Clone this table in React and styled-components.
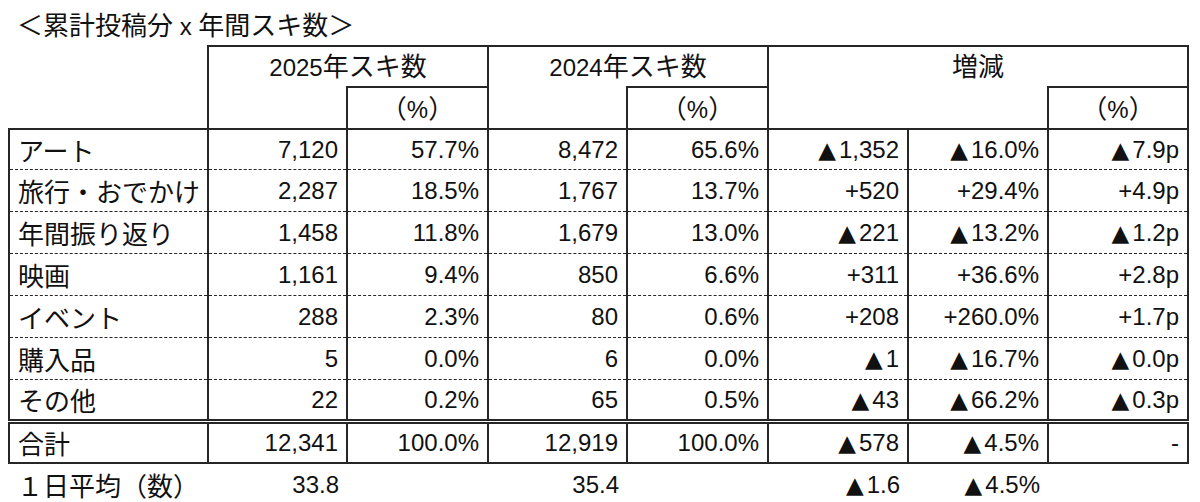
import React from "react";
import styled, { createGlobalStyle } from "styled-components";

const LINE = "#262626";
const SOLID = `2px solid ${LINE}`;
const DASHED = `1px dashed ${LINE}`;

const GlobalStyle = createGlobalStyle`
  html, body {
    margin: 0;
    padding: 0;
    background: #fff;
  }
  body {
    font-family: "Liberation Sans", "Noto Sans CJK JP", sans-serif;
    color: #111;
  }
`;

const widths = [199, 139, 141, 139, 141, 140, 140, 140];

const rows = [
  ["アート", "7,120", "57.7%", "8,472", "65.6%", "▲1,352", "▲16.0%", "▲7.9p"],
  ["旅行・おでかけ", "2,287", "18.5%", "1,767", "13.7%", "+520", "+29.4%", "+4.9p"],
  ["年間振り返り", "1,458", "11.8%", "1,679", "13.0%", "▲221", "▲13.2%", "▲1.2p"],
  ["映画", "1,161", "9.4%", "850", "6.6%", "+311", "+36.6%", "+2.8p"],
  ["イベント", "288", "2.3%", "80", "0.6%", "+208", "+260.0%", "+1.7p"],
  ["購入品", "5", "0.0%", "6", "0.0%", "▲1", "▲16.7%", "▲0.0p"],
  ["その他", "22", "0.2%", "65", "0.5%", "▲43", "▲66.2%", "▲0.3p"],
];

const total = ["合計", "12,341", "100.0%", "12,919", "100.0%", "▲578", "▲4.5%", "-"];
const average = ["１日平均（数）", "33.8", "", "35.4", "", "▲1.6", "▲4.5%", ""];

const Page = styled.div`
  width: 1200px;
  height: 502px;
  overflow: hidden;
  padding-left: 8px;
  box-sizing: border-box;
`;

const Title = styled.div`
  height: 45px;
  line-height: 48px;
  padding-left: 9px;
  font-size: 26px;
  font-family: "Noto Sans CJK JP", sans-serif;
  white-space: nowrap;
`;

const Latin = styled.span`
  font-family: "Liberation Sans", sans-serif;
  font-size: 24px;
`;

const Jp = styled.span`
  font-family: "Noto Sans CJK JP", sans-serif;
  font-size: 26px;
`;

const Mark = styled.span`
  font-family: "DejaVu Sans", sans-serif;
  font-size: 23px;
  margin-right: 3px;
`;

const Table = styled.table`
  border-collapse: collapse;
  table-layout: fixed;
  width: 1179px;
  font-size: 24px;
`;

const Col = styled.col`
  width: ${(p) => p.$w}px;
`;

const Head = styled.th`
  height: ${(p) => p.$h}px;
  padding: 0;
  font-weight: 400;
  text-align: center;
  vertical-align: middle;
  line-height: 30px;
  white-space: nowrap;
  border-top: ${(p) => (p.$top ? SOLID : "none")};
  border-left: ${(p) => (p.$left ? SOLID : "none")};
  border-right: ${(p) => (p.$right ? SOLID : "none")};
`;

const Cell = styled.td`
  height: ${(p) => p.$h}px;
  padding: 0 8px;
  line-height: 30px;
  vertical-align: middle;
  white-space: nowrap;
  text-align: ${(p) => (p.$label ? "left" : "right")};
  font-family: ${(p) =>
    p.$label ? `"Noto Sans CJK JP", sans-serif` : `"Liberation Sans", sans-serif`};
  font-size: ${(p) => (p.$label ? "26px" : "24px")};
  border-left: ${(p) => (p.$open ? "none" : SOLID)};
  border-right: ${(p) => (p.$open ? "none" : SOLID)};
  border-top: ${(p) => (p.$top ? SOLID : "none")};
  border-bottom: ${(p) => (p.$open ? "none" : p.$end ? SOLID : DASHED)};
`;

const GapCell = styled.td`
  height: 1px;
  padding: 0;
  border: none;
  font-size: 0;
  line-height: 0;
`;

const Pct = () => (
  <>
    <Jp>（</Jp>%<Jp>）</Jp>
  </>
);

const YearHead = ({ year }) => (
  <>
    {year}
    <Jp>年スキ数</Jp>
  </>
);

// "▲" is drawn a little larger than the Liberation glyph
const Value = ({ text }) =>
  text.startsWith("▲") ? (
    <>
      <Mark>▲</Mark>
      {text.slice(1)}
    </>
  ) : (
    text
  );

const App = () => {
  return (
    <Page>
      <GlobalStyle />
      <Title>
        ＜累計投稿分<Latin> x </Latin>年間スキ数＞
      </Title>
      <Table>
        <colgroup>
          {widths.map((w, i) => (
            <Col key={i} $w={w} />
          ))}
        </colgroup>
        <thead>
          <tr>
            <Head $h={39} />
            <Head $h={39} colSpan={2} $top $left $right>
              <YearHead year="2025" />
            </Head>
            <Head $h={39} colSpan={2} $top $left $right>
              <YearHead year="2024" />
            </Head>
            <Head $h={39} colSpan={3} $top $left $right>
              <Jp>増減</Jp>
            </Head>
          </tr>
          <tr>
            <Head $h={40} />
            <Head $h={40} $left />
            <Head $h={40} $top $left $right>
              <Pct />
            </Head>
            <Head $h={40} $left />
            <Head $h={40} $top $left $right>
              <Pct />
            </Head>
            <Head $h={40} $left />
            <Head $h={40} />
            <Head $h={40} $top $left $right>
              <Pct />
            </Head>
          </tr>
        </thead>
        <tbody>
          {rows.map((row, r) => {
            const first = r === 0;
            const last = r === rows.length - 1;
            return (
              <tr key={row[0]}>
                {row.map((v, c) => (
                  <Cell
                    key={c}
                    $h={first || last ? 39 : 41}
                    $label={c === 0}
                    $top={first}
                    $end={last}
                  >
                    <Value text={v} />
                  </Cell>
                ))}
              </tr>
            );
          })}
          <tr>
            <GapCell colSpan={8} />
          </tr>
          <tr>
            {total.map((v, c) => (
              <Cell key={c} $h={38} $label={c === 0} $top $end>
                <Value text={v} />
              </Cell>
            ))}
          </tr>
          <tr>
            {average.map((v, c) => (
              <Cell key={c} $h={41} $label={c === 0} $open>
                <Value text={v} />
              </Cell>
            ))}
          </tr>
        </tbody>
      </Table>
    </Page>
  );
};

export default App;
